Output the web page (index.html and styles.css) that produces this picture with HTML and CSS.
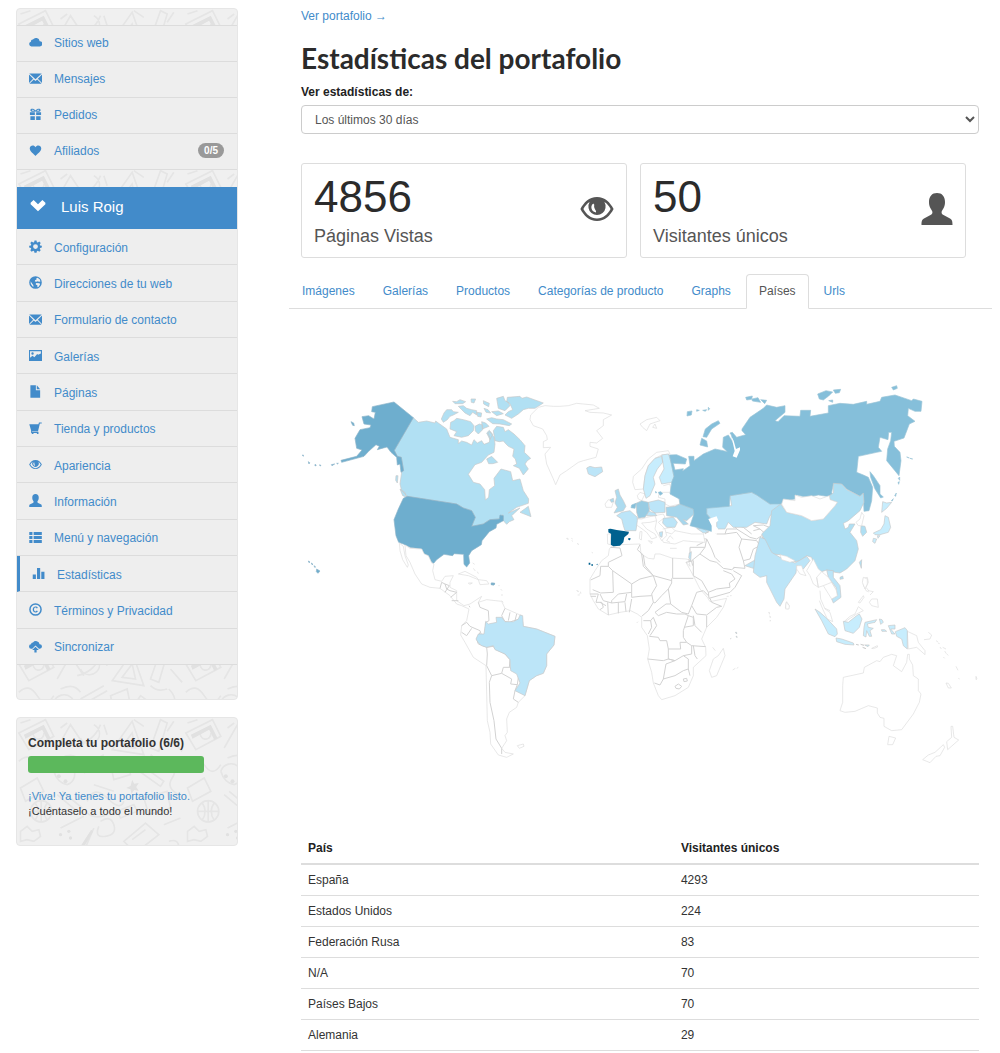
FILE: index.html
```html
<!DOCTYPE html>
<html lang="es">
<head>
<meta charset="utf-8">
<meta name="viewport" content="width=device-width, initial-scale=1">
<title>Estadísticas del portafolio</title>
<link rel="stylesheet" href="styles.css">
</head>
<body>
<svg class="sprite" aria-hidden="true">
  <symbol id="i-cloud" viewBox="0 0 14 14"><path d="M2.600 11.200a2.600 2.600 0 0 1-.5-5.100A2 2 0 0 1 4.200 3.900 4 4 0 0 1 11.500 5.600a2.800 2.800 0 0 1 .1 5.600z"/></symbol>
  <symbol id="i-mail" viewBox="0 0 14 14"><path d="M.3 1.500h13.400L7 7.900zM0 2.600l4.500 4.600L0 11.800zM14 2.600v9.200L9.500 7.200zM5.200 8 7 9.700 8.800 8l4.700 4.700H.5z"/></symbol>
  <symbol id="i-gift" viewBox="0 0 14 14"><path fill-rule="evenodd" d="M1 4.500h5.300v3H1zM7.700 4.500H13v3H7.700zM1.500 8.800h4.800V13H1.500zM7.700 8.800h4.800V13H7.700zM7 3.700C5.800 4 1.500 4.600 1.500 2.400 1.500.2 5.300.3 7 2.600 8.700.3 12.500.2 12.500 2.400 12.500 4.600 8.200 4 7 3.700zM3 2.300c.5.900 1.700.8 2.700.7C4.900 1.800 3.300 1.500 3 2.300zM11 2.300c-.3-.8-1.900-.5-2.700.7 1 .1 2.200.2 2.700-.7z"/></symbol>
  <symbol id="i-heart" viewBox="0 0 14 14"><path d="M7 12.800C5.500 11 .8 8 .8 4.800.8 1.200 5.600.4 7 3.600c1.400-3.200 6.200-2.400 6.200 1.200C13.200 8 8.500 11 7 12.800z"/></symbol>
  <symbol id="i-down" viewBox="0 0 16 16"><path d="M.6 4.800 3.600 1.900 8 6.300 12.400 1.900l3 2.900v1.400L8 13.200.6 6.200z"/></symbol>
  <symbol id="i-cog" viewBox="0 0 14 14"><path fill-rule="evenodd" d="M5.900.5h2.200l.4 1.800 1 .4 1.600-1 1.500 1.500-1 1.600.4 1 1.800.4v1.900l-1.800.4-.4 1 1 1.600-1.500 1.500-1.600-1-1 .4-.4 1.800H5.900l-.4-1.800-1-.4-1.600 1-1.500-1.500 1-1.600-.4-1L.2 8.100V6.200L2 5.800l.4-1-1-1.600 1.500-1.500 1.600 1 1-.4zM7 4.500a2.600 2.600 0 1 0 0 5.200 2.600 2.600 0 0 0 0-5.200z"/></symbol>
  <symbol id="i-globe" viewBox="0 0 14 14"><path fill-rule="evenodd" d="M7 .2a6.800 6.800 0 1 1 0 13.600A6.800 6.800 0 0 1 7 .2zM9.300 2 7.800 2.300l.5 1.200-1.800 1-.2 1.400 1.600.4 1.300-.7 1.600.7 1.500-.5-.6-2zM7.900 7.600l-.8 1 .9 1 .9.200.2 2.300 1.300-.6 1.500-2.400-.5-1.400zM1.700 5.600l.3 3 1.900 2.700 1 .3-.3-1.900-1.500-1.800z"/></symbol>
  <symbol id="i-picture" viewBox="0 0 14 14"><path fill-rule="evenodd" d="M0 1.200h14v11.600H0zM1.100 2.300v7l2.700-1.900 2 1.500 3-3.600 1 1 3-1.500V2.300zM3.800 3.600a1.300 1.300 0 1 1 0 2.600 1.300 1.300 0 0 1 0-2.600z"/></symbol>
  <symbol id="i-file" viewBox="0 0 14 14"><path d="M1.500.2h5.900v5.400H12v8.100H1.500zM8.400.2 12 4.500H8.400z"/></symbol>
  <symbol id="i-cart" viewBox="0 0 14 14"><path d="M.3 2.300h9.900L10.700.5h3v1.200h-2L9.700 9.900H3.300v.7h6.900v2.300H8.500v-1H4.800v1H3v-1h-.7L2.200 8.800z"/></symbol>
  <symbol id="i-eye" viewBox="0 0 34 26"><path fill-rule="evenodd" d="M17 1c8 0 13.200 5.500 16.600 12C30.200 19.500 25 25 17 25S3.800 19.500.4 13C3.800 6.500 9 1 17 1zM9.600 6.100C7 7.700 5 10.200 3.400 13c3 5.500 7.600 9.500 13.600 9.500S27.600 18.500 30.600 13c-1.600-2.800-3.600-5.300-6.200-6.900A8.600 8.600 0 1 1 9.600 6.100zM13.200 7.400c-1.900 1.500-2.300 4-1.300 6.100.8 1.700 2.300 2.600 3.900 2.900.6-1.200 0-2-.7-3-.8-1.200-1.300-2.900-.8-4.600z"/></symbol>
  <symbol id="i-user" viewBox="0 0 32 32"><path d="M16 0c5 0 8 3.400 8 9 0 2.900-.6 4.600-1.500 6.300-.8 1.600-1.700 2.500-1.900 3.700-.2 1.300.5 2.200 1.900 3l6.500 3.500c2 1 2.500 2.500 2.500 6.500H.5c0-4 .5-5.500 2.500-6.500L9.500 22c1.400-.8 2.100-1.700 1.900-3-.2-1.200-1.100-2.100-1.900-3.700C8.600 13.600 8 11.900 8 9c0-5.600 3-9 8-9z"/></symbol>
  <symbol id="i-list" viewBox="0 0 14 14"><path d="M.3 1.200h3.400v3.200H.3zM5 1.200h8.800v3.200H5zM.3 5.500h3.400v3.200H.3zM5 5.500h8.800v3.200H5zM.3 9.800h3.400V13H.3zM5 9.800h8.800V13H5z"/></symbol>
  <symbol id="i-stats" viewBox="0 0 14 14"><path d="M.8 8h3.400v5H.8zM5.400 1h3.400v12H5.400zM10 5h3.400v8H10z"/></symbol>
  <symbol id="i-copy" viewBox="0 0 14 14"><path fill-rule="evenodd" d="M7 .2a6.800 6.800 0 1 1 0 13.600A6.800 6.800 0 0 1 7 .2zM7 1.800a5.200 5.200 0 1 0 0 10.400A5.200 5.200 0 0 0 7 1.800zM9.600 5.200l-1.200.6c-.9-1.500-3-1-3 1.200s2.100 2.700 3 1.200l1.200.6C8.200 11.200 4 10.700 4 7s4.200-4.200 5.600-1.800z"/></symbol>
  <symbol id="i-sync" viewBox="0 0 14 14"><path d="M2.500 9.300a2.300 2.300 0 0 1-.3-4.600A2 2 0 0 1 4.300 2.600 4 4 0 0 1 11.400 4.500a2.400 2.400 0 0 1 .3 4.800h-1L7 5.800 3.500 9.300zM7 7.200l3.600 3.500H8.200v2.800H5.800v-2.800H3.400z"/></symbol>
</svg>

<div class="page">
  <aside class="sidebar">
    <nav class="panel panel-nav">
      <ul class="menu">
        <li><a href="#"><svg class="icon"><use href="#i-cloud"/></svg>Sitios web</a></li>
        <li><a href="#"><svg class="icon"><use href="#i-mail"/></svg>Mensajes</a></li>
        <li><a href="#"><svg class="icon"><use href="#i-gift"/></svg>Pedidos</a></li>
        <li><a href="#"><svg class="icon"><use href="#i-heart"/></svg>Afiliados<span class="badge">0/5</span></a></li>
      </ul>
      <a class="owner" href="#"><svg class="icon"><use href="#i-down"/></svg>Luis Roig</a>
      <ul class="menu menu-site">
        <li><a href="#"><svg class="icon"><use href="#i-cog"/></svg>Configuración</a></li>
        <li><a href="#"><svg class="icon"><use href="#i-globe"/></svg>Direcciones de tu web</a></li>
        <li><a href="#"><svg class="icon"><use href="#i-mail"/></svg>Formulario de contacto</a></li>
        <li><a href="#"><svg class="icon"><use href="#i-picture"/></svg>Galerías</a></li>
        <li><a href="#"><svg class="icon"><use href="#i-file"/></svg>Páginas</a></li>
        <li><a href="#"><svg class="icon"><use href="#i-cart"/></svg>Tienda y productos</a></li>
        <li><a href="#"><svg class="icon"><use href="#i-eye"/></svg>Apariencia</a></li>
        <li><a href="#"><svg class="icon"><use href="#i-user"/></svg>Información</a></li>
        <li><a href="#"><svg class="icon"><use href="#i-list"/></svg>Menú y navegación</a></li>
        <li class="current"><a href="#"><svg class="icon"><use href="#i-stats"/></svg>Estadísticas</a></li>
        <li><a href="#"><svg class="icon"><use href="#i-copy"/></svg>Términos y Privacidad</a></li>
        <li><a href="#"><svg class="icon"><use href="#i-sync"/></svg>Sincronizar</a></li>
      </ul>
    </nav>
    <section class="panel panel-progress">
      <h2>Completa tu portafolio (6/6)</h2>
      <div class="progress"></div>
      <p><a href="#">¡Viva! Ya tienes tu portafolio listo.</a><br>¡Cuéntaselo a todo el mundo!</p>
    </section>
  </aside>

  <main class="main">
    <header class="intro">
      <a href="#">Ver portafolio →</a>
      <h1>Estadísticas del portafolio</h1>
      <label for="range">Ver estadísticas de:</label>
      <select id="range"><option>Los últimos 30 días</option></select>
    </header>

    <div class="cards">
      <section class="card">
        <div><div class="figure">4856</div><div class="caption">Páginas Vistas</div></div>
        <svg class="card-icon card-eye"><use href="#i-eye"/></svg>
      </section>
      <section class="card">
        <div><div class="figure">50</div><div class="caption">Visitantes únicos</div></div>
        <svg class="card-icon"><use href="#i-user"/></svg>
      </section>
    </div>

    <nav class="tabs">
      <a href="#">Imágenes</a>
      <a href="#">Galerías</a>
      <a href="#">Productos</a>
      <a href="#">Categorías de producto</a>
      <a href="#">Graphs</a>
      <a href="#" class="active">Países</a>
      <a href="#">Urls</a>
    </nav>

    <svg class="map" viewBox="289 370 703 410" role="img" aria-label="Visitantes por país">
      <!-- Africa and the Middle East -->
      <g transform="translate(560 480) scale(.33333)">
        <path class="coast" d="M152 205 184 197 240 195 243 225 265 238 282 240 285 225 300 225 335 237 378 240 386 242 390 262 378 250 400 290 420 330 442 355 450 368 500 358 490 385 470 415 440 445 425 480 437 505 438 530 400 565 400 590 385 625 345 650 305 662 295 650 280 612 275 580 263 540 268 510 262 470 245 445 245 415 232 405 212 395 180 400 145 408 115 390 100 365 90 345 90 300 105 275 125 245 145 230 148 210z"/>
        <path class="border" d="M152 205 180 207 186 230 145 250 145 262M145 262 122 262 120 290 92 303M145 262 158 275 160 340 122 342 98 332M158 275 215 315 240 300 280 290 250 262 245 225M240 197 232 212 250 228 255 260 280 290 335 305M338 237 338 298 400 298M335 298 335 312 325 330 332 375 318 375 285 400M280 290 290 320 275 345 280 370 265 395 245 412M215 315 215 340 175 345 155 365 155 372 130 365 120 345M215 340 215 355 240 352 275 350M215 360 208 400M195 370 198 398M175 370 175 403M155 372 195 368 200 345M143 370 145 408M120 370 138 380M90 345 115 345 108 370 125 370 130 385 120 392M92 352 108 352M332 375 365 400 385 405 395 380 410 340 430 335 445 350M325 330 305 350 285 372 280 370M395 380 410 405 440 408 470 385 485 382 455 370 450 358M285 400 295 410 320 400 350 405 375 405 385 410 370 455 370 475 380 490 360 490 362 510 325 510 320 485 300 485 295 475 268 472M385 410 400 415 400 440 372 445M400 410 405 440 425 460M440 410 440 445M380 490 395 500 395 525 370 530 345 545 325 540 325 510M395 500 437 503M263 540 310 545 325 540 345 545 318 555 310 600 345 590 370 575 385 570 385 540 370 530M300 618 310 600M283 612 300 618M385 570 390 590M345 622 355 615 365 622 358 630 348 628zM370 600 380 598 382 606 372 608zM250 425 272 425 275 445 265 465M272 425 280 415 290 440 270 470M400 500 405 530 412 540M385 242 395 248 398 260M395 245 420 225 435 205 390 205 390 225M420 225 450 245 470 250 490 268 515 272 525 265M435 205 440 180 410 178 400 185M440 180 455 210 465 235 480 250M378 250 400 245 400 290 425 305 445 340 470 330 510 325 508 312 525 300 515 285 490 275M445 340 447 358 510 340 525 325 545 290 520 275M435 165 455 150 470 165 495 165 530 160 545 180 537 205 550 245 555 268 520 265M430 190 410 200M545 180 590 185 600 200 580 210 570 240 550 245M495 165 500 150 530 150 570 175 590 180 605 170 610 180 625 172 600 150 580 155M530 150 520 135 550 145 575 165M600 150 580 140 610 138 628 145"/>
        <path class="coast" d="M490 508 495 530 470 590 455 595 448 575 460 540 475 530zM300 165 345 155 395 165 430 165 435 190 400 188 370 185 345 195 310 190zM20 178h4v4zM34 178l4 2M52 194l4 2M50 335l6 3M58 345l5-4M500 352h6M510 350h5M628 400v6M630 412v4M630 424v3M458 505l8 10M518 573l8-5M530 568l5-3M95 220l4 2M230 432l4-4"/>
        <path class="c3" d="M526 460h4v5zM510 480l4-2M528 472h3v4zM388 222 394 218 392 245 386 236z"/>
        <path class="es" d="M145 150 152 149 170 153 207 158 205 165 193 175 190 190 180 200 160 202 152 197 153 165 145 160zM205 177l7 1-2 6-5-1zM86 251h5v6h-5zM94 256h5v4h-5zM109 256l4-2-1 5z"/>
        <path class="coast" d="M142 165 152 165 151 197 143 195z"/>
      </g>
      <!-- Greenland, Europe, Russia and Central Asia -->
      <g transform="translate(540 370) scale(.33333)">
        <path class="coast" d="M60 112 40 112 15 110-5 115-28 138-30 152-20 170 8 180 20 200 22 212 10 218 10 236 32 235 15 255 20 285 40 330 47 347 60 318 80 305 115 280 130 275 168 265 175 240 150 232 150 220 170 222 188 208 170 185 190 170 190 152 215 138 190 132 150 130 135 125 178 118 160 108 110 103 85 110zM300 165 320 152 350 145 360 155 330 165 320 185 308 175zM338 175 350 178 345 165zM195 405 205 392 220 398 215 415 198 415zM278 340 280 322 305 300 325 270 350 250 385 245 390 255 365 258 345 268 325 290 315 320 310 360 285 362zM292 380 300 370 315 375 305 395 295 390zM370 350 390 345 395 375 415 385 420 405 390 412 375 405 375 390 355 385 358 370 390 370M285 450 305 450 320 445 345 440 350 455 330 460 305 462 320 480 345 495 350 505 335 510 320 490 300 475 285 465zM345 440 370 435 375 445 355 460 375 480 380 500 365 515 345 480 350 455M368 480 395 475 405 485 395 495 380 490M390 520 380 515 390 500 400 510M390 538h20M300 488l6 0-2 25-6-4zM325 515l12 3-3 6z"/>
        <path class="c3" d="M140 297 150 292 165 296 185 294 188 308 165 323 145 315zM230 440 245 430 270 425 292 445 292 455 288 485 255 485 250 470 245 450zM320 425 345 432 350 440 320 440zM325 400 355 393 375 400 375 430 345 432 328 420zM370 448 400 445 412 460 405 475 380 475 368 462zM470 478 490 478 505 490 490 492zM358 490 368 488 366 505 360 502z"/>
        <path class="c4" d="M345 268 365 262 368 280 352 300 340 325 345 345 330 380 318 388 310 360 315 320 325 290zM365 258 385 255 395 285 402 325 395 340 365 345 358 325 372 300z"/>
        <path class="uk" d="M225 365 235 360 240 378 250 395 258 412 250 425 222 432 232 415 225 402 230 385zM210 392l10-4 2 10-8 2z"/>
        <path class="de" d="M288 403 305 395 325 400 328 425 315 445 295 448 290 430z"/>
        <path class="ua" d="M378 415 405 412 420 405 460 420 462 435 440 455 430 452 445 465 430 468 410 445 380 440z"/>
        <path class="ru" d="M275 408 288 403 285 418 273 416z"/>
        <path class="c3" d="M500 415 540 412 575 410 570 380 635 370 650 378 690 405 725 400 720 420 690 440 680 465 645 460 620 475 580 475 565 460 555 480 530 480 530 455 515 450 500 435zM615 590 650 570 655 540 675 510 690 520 700 540 685 560 690 590 665 600 640 598z"/>
        <path class="ru" d="M388 258 410 257 440 270 436 285 400 283 405 303 430 299 428 306 450 290 446 262 462 262 462 275 490 255 525 240 550 245 562 248 548 235 550 205 565 198 580 222 574 198 570 192 577 190 590 205 617 197 606 185 606 180 630 145 670 118 680 108 710 115 735 110 735 130 705 155 714 158 732 140 780 142 782 124 812 124 810 142 865 132 865 110 900 103 940 106 980 97 980 106 1020 97 1025 85 1065 78 1115 95 1120 90 1146 97 1143 127 1125 127 1105 118 1103 140 1125 157 1108 165 1092 207 1062 217 1063 232 1080 250 1083 275 1077 320 1040 275 1043 240 1052 215 1055 190 1046 190 1044 212 1020 205 1015 235 1025 247 1010 250 955 262 950 310 970 318 985 325 998 355 995 395 987 425 972 427 970 378 960 382 920 360 905 345 880 345 875 370 880 385 835 378 800 385 770 378 765 390 735 395 725 405 690 405 650 378 635 370 570 380 568 412 500 418 500 435 515 452 518 488 450 470 462 435 460 420 420 405 418 390 390 375 395 340 402 322z"/>
        <path class="sea" d="M581 215 588 240 600 235 600 243 590 266 578 262 584 246 574 202z"/>
        <path class="sea" d="M505 450 530 442 535 455 522 465 535 480 530 495 515 490 515 470z"/>
        <path class="ru" d="M535 155 540 163 515 180 500 205 489 203 496 180 515 165zM485 208 500 216 503 234 480 228zM442 128l14-2-2 12-13 3zM470 122l8 2-8 3zM488 124l12-2-4 5zM505 115l4 4-4 5zM617 85l20-4 -2 10-15 2zM636 90l18-4 8 14-25-4zM662 92l18 2-6 10zM833 75l25-10 20 4-12 12-16 12-12-3zM880 63l22-2-4 10-12 2zM866 95l12-2v7zM1055 55l15-5 2 8-12 5zM990 308 1000 320 1020 350 1020 375 1030 384 1022 387 1005 360 992 325zM1075 328l4-4v10zM1074 340l4-2-2 8zM1064 380l5-8-2 10zM1054 395l6-6-3 7zM1100 264l8 3zM1110 268l8 2zM355 370l8-2 5 6-8 5zM347 367l3 4-3 1z"/>
      </g>
      <!-- East Asia and India -->
      <g transform="translate(760 370) scale(.33333)">
        <path class="cn" d="M220 343 245 345 260 362 300 382 310 372 312 400 300 425 265 455 250 463 255 480 265 475 268 465 285 465 270 490 290 515 295 540 285 575 260 600 240 612 225 610 200 603 185 608 165 600 155 565 140 560 120 575 105 578 60 557 35 555 15 515 5 495 30 470 35 425 62 405 80 430 125 440 155 455 190 450 225 410 232 400 210 392 208 380 220 372zM240 625l8-4 2 8-10 2z"/>
        <path class="c3" d="M0 505 15 510 35 550 60 565 105 582 140 562 150 575 130 600 110 590 108 612 75 660 72 690 60 712 50 700 20 640 20 620 0 625-20 610-15 560zM200 603 220 605 220 625 240 650 243 685 220 702 215 690 232 680 228 655 205 625z"/>
        <path class="c4" d="M368 398 380 402 395 400 380 418 365 430zM375 440 385 445 392 475 385 490 360 497 345 497 340 492 362 482 372 465zM340 508 350 510 345 523 338 518zM352 500l8 0-6 8z"/>
        <path class="cn" d="M303 470 315 472 320 490 308 502 302 490zM298 580 305 572 304 598z"/>
        <path class="coast" d="M65 405 70 390 105 395 105 378 125 385 155 380 180 390 208 380 210 392 232 400 225 410 190 450 155 455 125 440 80 430zM60 557 80 562 105 575 90 580 65 572zM110 590 125 590 130 605 138 620 120 615 110 600zM160 570 175 600 185 608 170 625 175 655 160 645 150 620 140 605zM185 608 205 625 228 660 232 680 215 690 190 650 175 655 170 625M190 650 215 640 228 662M80 698 88 710 84 720 76 716zM288 460 300 450 305 430 312 440 305 470 295 470zM310 628 322 625 325 640 318 655 330 670 318 665 310 648z"/>
      </g>
      <!-- South-east Asia and Oceania -->
      <g transform="translate(740 560) scale(.33333)">
        <path class="coast" d="M310 355 370 342 373 325 410 305 420 308 430 295 455 286 470 290 460 320 485 338 500 310 503 286 508 286 508 300 518 318 520 350 535 360 535 395 543 405 538 430 520 465 485 512 455 515 432 502 432 478 420 475 412 462 412 447 385 440 345 457 315 460 300 455 308 430 308 380zM447 532 467 537 458 557 443 557zM633 502 638 502 642 535 656 543 623 572 620 548 635 535zM610 557 614 565 600 590 588 592 570 611 548 602 565 588 585 580zM502 217 530 230 535 250 555 275 555 287 530 265 505 270zM370 55 382 60 382 75 375 90 367 70zM385 95 400 98 390 108M395 120 412 120 415 145 395 140 388 130zM355 130 370 110 372 115 360 132zM355 143 370 155 350 165 320 185 312 188 330 172 345 165zM240 95 242 120 255 150 270 160 278 188 262 180 248 150 238 125M255 148 270 155M552 242 570 240 575 228 565 220M588 245l6 4M594 252l5 2M600 264l4 6M608 265l10 5M614 276l5 8M620 285l5 4M610 294l4 4M648 322l6 12M655 358l4 2M708 352v10l3-2zM618 372 625 373 634 387 625 387zM395 268 412 260 413 264 400 269zM138 130 148 140 147 150 137 150z"/>
        <path class="c4" d="M225 150 240 160 260 178 290 210 292 225 285 233 265 225 245 185zM288 237 305 240 340 252 342 258 315 256 290 248zM310 187 325 190 350 170 358 165 366 180 358 205 340 223 315 215zM375 190 410 182 405 190 382 195 385 205 400 208 390 215 395 232 388 232 380 215 378 234 370 230 372 205zM418 180l8 2 4 8-8 6zM424 212l10 0 6 5-14 0zM445 200 465 198 465 210 452 210 465 225 455 225zM466 218 495 206 502 215 502 270 490 260 485 240 470 232zM348 256l8 2zM362 256l10 3zM368 265l10 4zM374 258l14 0-4 5z"/>
        <path class="coast" d="M85 160l4 2M89 170l3 6M90 184l3 2"/>
      </g>
      <!-- North America -->
      <g transform="translate(290 370) scale(.33333)">
        <path class="ca" d="M370 146 385 160 410 156 435 162 437 156 445 162 470 180 480 205 505 212 505 224 515 216 530 220 545 228 552 212 562 222 575 215 582 226 598 220 600 206 594 192 600 188 612 205 615 225 612 250 595 258 575 280 555 287 535 316 550 340 570 345 584 362 586 393 596 385 598 362 614 350 612 328 633 300 662 308 668 335 690 330 700 365 716 390 715 403 680 415 655 432 690 417 665 440 672 452 658 458 650 466 640 455 638 437 628 450 600 452 580 465 545 472 556 445 545 425 520 417 500 405 352 382 335 365 330 345 335 310 341 305 334 265 322 262 313 244zM318 320h6l-2 22-5-8zM330 360 345 370 350 385 338 380zM690 430 715 412 723 443zM454 150 462 132 470 122 485 122 490 128 505 130 490 138 480 142 472 152 460 160zM482 160 492 155 500 148 520 152 542 158 552 170 550 185 535 200 515 205 492 200 500 188 480 180zM488 97 500 98 510 92 527 98 518 104 495 104zM505 112 520 110 530 118 545 122 560 125 560 138 548 130 540 140 525 132 515 122zM543 90h14l-5 12-8-2zM560 130l15 2-2 12-10-2zM580 95l18 8-2 10-15-8zM582 118l12 4 8 10-14-2zM620 88 640 82 645 95 655 100 660 110 645 125 625 118zM652 85 690 82 696 88 710 84 760 102 735 118 715 118 700 122 685 135 665 148 645 138 655 128 668 122 660 104 650 98zM575 158l12 4 10 10-20 8zM590 150 605 146 620 150 640 152 665 165 658 170 630 165 608 164zM605 128l20-2 15 8-20 6zM555 172 568 165 578 168 578 182 565 195 556 186zM610 185 620 172 640 175 645 188 655 182 672 195 690 212 705 230 703 250 722 268 712 275 705 285 715 300 700 318 688 298 670 290 680 285 676 270 668 262 672 240 655 232 648 225 640 216 628 218 615 215zM590 270l15-8 18 18-15 4-12 0zM590 192l8-8 10 12-8 16z"/>
        <path class="us" d="M247 113 312 99 370 146 313 244 322 262 334 265 341 305 333 310 330 285 322 288 320 265 303 250 291 234 262 242 268 232 258 227 236 247 222 262 155 280 153 274 200 262 216 243 200 238 195 208 210 182 240 176 243 168 222 165 216 143 236 140 252 150 256 130 245 128zM183 158l8 4 2 8-5-1zM37 258h3v4zM55 278l4 3-2 4zM75 286l4 3-4 2zM88 288h4v3zM124 287l10-2-8 5zM140 283l5 0-2 2zM55 576l5 3-3 2zM64 582l5 4-3 1zM72 590l5 4-3 1zM80 600l10 6-6 7-5-5zM604 642l10 1-2 5-8-1zM352 382 500 405 520 417 545 425 556 445 545 472 580 465 600 452 628 450 630 438 640 440 640 455 620 466 618 477 598 488 576 515 574 527 545 545 536 560 539 582 530 594 522 586 521 556 492 554 488 560 462 556 440 572 431 583 425 580 415 560 400 555 396 540 360 535 340 525 326 520 318 500 312 452 325 420 340 388z"/>
      </g>
      <!-- Mexico to Cape Horn -->
      <g transform="translate(390 540) scale(.33333)">
        <path class="coast" d="M28 12 40 22 45 50 55 78 52 85 38 62 30 35zM45 18 60 28 95 30 103 45 115 50 125 72 132 75 128 95 135 122 155 127 165 112 190 110 180 130 180 145 200 155 200 185 222 200 240 195 275 172 265 190 290 182 335 187 345 208 395 230 400 262 440 270 495 292 492 318 470 345 470 380 460 403 440 410 418 425 405 470 385 490 380 505 358 520 350 540 352 580 345 590 350 605 335 628 345 640 370 645 350 655 325 648 302 615 300 580 292 545 288 380 250 355 225 310 212 288 215 260 230 245 237 210 215 200 200 195 180 170 150 148 120 145 95 135 75 105 60 70 48 50zM205 105 225 97 260 115 265 122 235 110zM265 122 290 125 297 135 270 137zM235 132l12 0-8 4zM325 140h4M332 150l4 5M336 165v6M335 185l5 5M248 72l6 4M250 88l6 8M262 98l3 6M382 620 400 615 402 622 388 628zM560 155l6 2M570 158l4 4M563 168l6 0M545 5l4 2M562 14l4 2"/>
        <path class="border" d="M150 148 155 130 165 135 170 150 180 155M165 135 178 140 165 160M180 155 200 160 182 175M185 185 205 185M237 200 240 205M265 190 270 205 295 215 297 245 287 250 285 290 275 290 270 275 240 262 230 250 215 260M215 280 230 290 245 268M270 280 260 300 265 315 290 325 292 345 290 380 305 410 335 403 340 385 358 385 360 362 345 345 315 330 310 322 290 325M345 208 335 230 345 248 360 250 370 245 395 240M360 220 355 245M380 225 375 245M335 403 365 420 362 435 382 437 385 415M358 385 385 402M382 437 375 455 370 480 385 490M305 410 298 430 300 490 312 545 318 600 335 628M335 628 335 645"/>
        <path class="c3" d="M287 247 295 255 320 250 318 235 335 235 345 248 370 248 385 240 390 228 398 230 400 262 440 270 495 292 492 318 470 345 470 380 460 403 440 410 418 425 405 470 375 455 390 432 380 405 362 395 360 362 345 345 315 332 310 320 290 325 275 320 265 312 258 300 265 285 282 285z"/>
        <path class="us" d="M304 132l10 1-2 5-8-1z"/>
      </g>
    </svg>

    <div class="table-wrap">
      <table>
        <thead><tr><th scope="col">País</th><th scope="col">Visitantes únicos</th></tr></thead>
        <tbody>
          <tr><td>España</td><td>4293</td></tr>
          <tr><td>Estados Unidos</td><td>224</td></tr>
          <tr><td>Federación Rusa</td><td>83</td></tr>
          <tr><td>N/A</td><td>70</td></tr>
          <tr><td>Países Bajos</td><td>70</td></tr>
          <tr><td>Alemania</td><td>29</td></tr>
        </tbody>
      </table>
    </div>
  </main>
</div>
</body>
</html>
```
FILE: styles.css
```css
* { box-sizing: border-box; }

body {
  margin: 0;
  background: #fff;
  color: #333;
  font: 12px/17px "Liberation Sans", Arial, sans-serif;
}

a { color: #428bca; text-decoration: none; }

.sprite { display: none; }

.page {
  display: grid;
  grid-template-columns: 222px minmax(0, 1fr);
  column-gap: 51px;
  padding: 8px 8px 0 16px;
}

/* Sidebar */
.sidebar { display: flex; flex-direction: column; gap: 17px; }

.panel {
  border: 1px solid #e6e6e6;
  border-radius: 4px;
  background-color: #f0f0f0;
  background-image: url("data:image/svg+xml,%3Csvg xmlns='http://www.w3.org/2000/svg' viewBox='0 0 500 480'%3E%3Cg fill='none' stroke='%23e5e5e5' stroke-width='5'%3E%3Cpath d='M5 45 85 5 110 55 35 95zM50 40a16 16 0 1 0 30 5M120 90 160 20 200 80M230 20a30 30 0 1 1-40 40M180 80q50-10 70-60M285 95 345 10 380 110zM315 85 345 45 355 90zM400 90 430 5 450 15 425 100zM460 60 495 100M5 130q30-30 55 10t50 0M110 160a32 32 0 1 1 40 40q-30-5-40-40M190 150 260 110M200 165 270 125M280 140 330 120 340 170 290 185zM370 140 440 190 430 205 360 155zM455 120q30 30 10 60t20 50M10 210 60 180 80 220 25 250zM120 230 180 280M135 220 195 270M210 250q20-50 60-10t50 10M380 240 450 220 460 270 395 290zM40 280a32 32 0 1 0 64 0 32 32 0 0 0-64 0M40 280h64M72 248v64M54 254q18 26 0 52M90 254q-18 26 0 52M130 330 200 295M250 310q30-20 40 10t-25 35-20-30M320 370 385 315 425 350 355 405zM345 365 385 335M440 320 490 300M10 340l20-15 15 15 20-5 5 20-20 15-20-5-20 5zM200 400 230 330M455 370q30-10 30 20t-30 20M20 420 90 400 110 440 40 465zM140 400q30 20 10 50M230 430 300 410 310 460M350 430 420 450M440 430l40 30M130 120q40-20 60 10M230 200l60 20M400 110q20 20 50 10M300 280l50-20 10 20-50 20zM210 285q20 20 60 5M130 30l20-15M10 15l30-10M260 20l10 30M350 5l30 20M470 10l-20 30'/%3E%3C/g%3E%3Cg fill='%23e1e1e1'%3E%3Cpath d='M20 50 80 20 100 60 90 65 75 35 25 62zM345 185l6 12 14-2-8 12 8 12-14-3-8 12-3-14-13-4 13-6zM190 385 222 335 228 340 200 388z'/%3E%3Ccircle cx='125' cy='175' r='6'/%3E%3Ccircle cx='145' cy='190' r='6'/%3E%3Ccircle cx='130' cy='350' r='5'/%3E%3Ccircle cx='155' cy='340' r='5'/%3E%3Ccircle cx='160' cy='360' r='5'/%3E%3Ccircle cx='290' cy='455' r='8'/%3E%3C/g%3E%3C/svg%3E");
  background-size: 167px 160px;
}

.panel-nav { padding: 16px 0 34px; }

.menu {
  display: grid;
  grid-auto-rows: 1fr;
  min-height: 145px;
  margin: 0;
  padding: 0;
  list-style: none;
  border-top: 1px solid #dcdcdc;
}

.menu-site { min-height: 436px; border-top: 0; }

.menu li {
  display: grid;
  background: #eee;
  border-bottom: 1px solid #dcdcdc;
}

.menu a {
  display: flex;
  align-items: center;
  gap: 12px;
  padding: 0 13px 0 12px;
}

.menu-site a { padding-top: 3px; }

.menu .current { border-left: 3px solid #428bca; }

.icon { width: 13px; height: 13px; margin-top: -3px; fill: #428bca; }

.badge {
  margin: -2px 0 0 auto;
  padding: 0 6px;
  border-radius: 8px;
  background: #999;
  color: #fff;
  font-size: 10px;
  line-height: 15px;
  font-weight: bold;
}

.owner {
  display: flex;
  align-items: center;
  gap: 15px;
  margin-top: 17px;
  padding: 10px 13px 12px;
  background: #428bca;
  color: #fff;
  font-size: 15px;
  line-height: 20px;
}

.owner .icon { width: 16px; height: 16px; fill: #fff; }

.panel-progress { padding: 17px 11px 26px; }

.panel-progress h2 { margin: 0 0 4px; font-size: 12px; line-height: 17px; }

.progress { width: 176px; height: 17px; border-radius: 3px; background: #5cb85c; }

.panel-progress p { margin: 16px 0 0; font-size: 11px; line-height: 15px; }

/* Main column */
.intro { display: flex; flex-direction: column; align-items: flex-start; padding: 0 13px 0 12px; }

h1 {
  margin: 16px 0 9px;
  color: #2b2b2b;
  font: bold 28px/34px Lato, sans-serif;
}

label { color: #222; font-weight: bold; line-height: 17px; }

select {
  width: 100%;
  height: 29px;
  margin-top: 4px;
  padding: 0 9px;
  border: 1px solid #ccc;
  border-radius: 4px;
  background: #fff;
  color: #555;
  font: inherit;
}

.cards {
  display: grid;
  grid-template-columns: 1fr 1fr;
  gap: 13px;
  padding: 29px 26px 0 12px;
}

.card {
  display: flex;
  justify-content: space-between;
  align-items: center;
  padding: 7px 12px;
  border: 1px solid #ddd;
  border-radius: 3px;
}

.figure { color: #2b2b2b; font-size: 44px; line-height: 51px; }
.caption { color: #555; font-size: 18px; line-height: 28px; }
.card-icon { width: 32px; height: 32px; margin-bottom: 4px; fill: #555; }
.card-eye { width: 34px; height: 26px; }

.tabs {
  display: flex;
  gap: 2px;
  margin-top: 16px;
  border-bottom: 1px solid #ddd;
}

.tabs a {
  margin-bottom: -1px;
  padding: 8px 12px;
  border: 1px solid transparent;
  border-radius: 4px 4px 0 0;
  line-height: 17px;
}

.tabs .active { border-color: #ddd; border-bottom-color: #fff; background: #fff; color: #555; }

/* World map */
.map { display: block; width: 100%; height: auto; margin: 60px 0 54px; }
.map path { stroke: #c9c9c9; stroke-width: 2; stroke-linejoin: round; fill: #fff; }
.map .coast { stroke: #dcdcdc; }
.map .border { stroke: #d2d2d2; stroke-width: 3; fill: none; }
.map .sea { stroke: none; }
.map .es { fill: #00618f; stroke: none; }
.map .us { fill: #6eaece; stroke: #8cb4c8; }
.map .ru { fill: #85bfda; stroke: #9cc4d6; }
.map .de { fill: #98cce3; }
.map .ua { fill: #a6d6ec; }
.map .uk { fill: #acdbef; }
.map .cn { fill: #afdff3; }
.map .ca { fill: #b1e0f3; }
.map .c3 { fill: #bce5f8; }
.map .c4 { fill: #c7edfd; }

.table-wrap { padding: 0 13px 0 12px; }

table { width: 100%; border-collapse: collapse; table-layout: fixed; }

th, td { padding: 6px 7px; text-align: left; line-height: 18px; }
th:first-child { width: 55%; }
th { color: #222; border-bottom: 2px solid #ddd; }
td { border-bottom: 1px solid #ddd; }
```
